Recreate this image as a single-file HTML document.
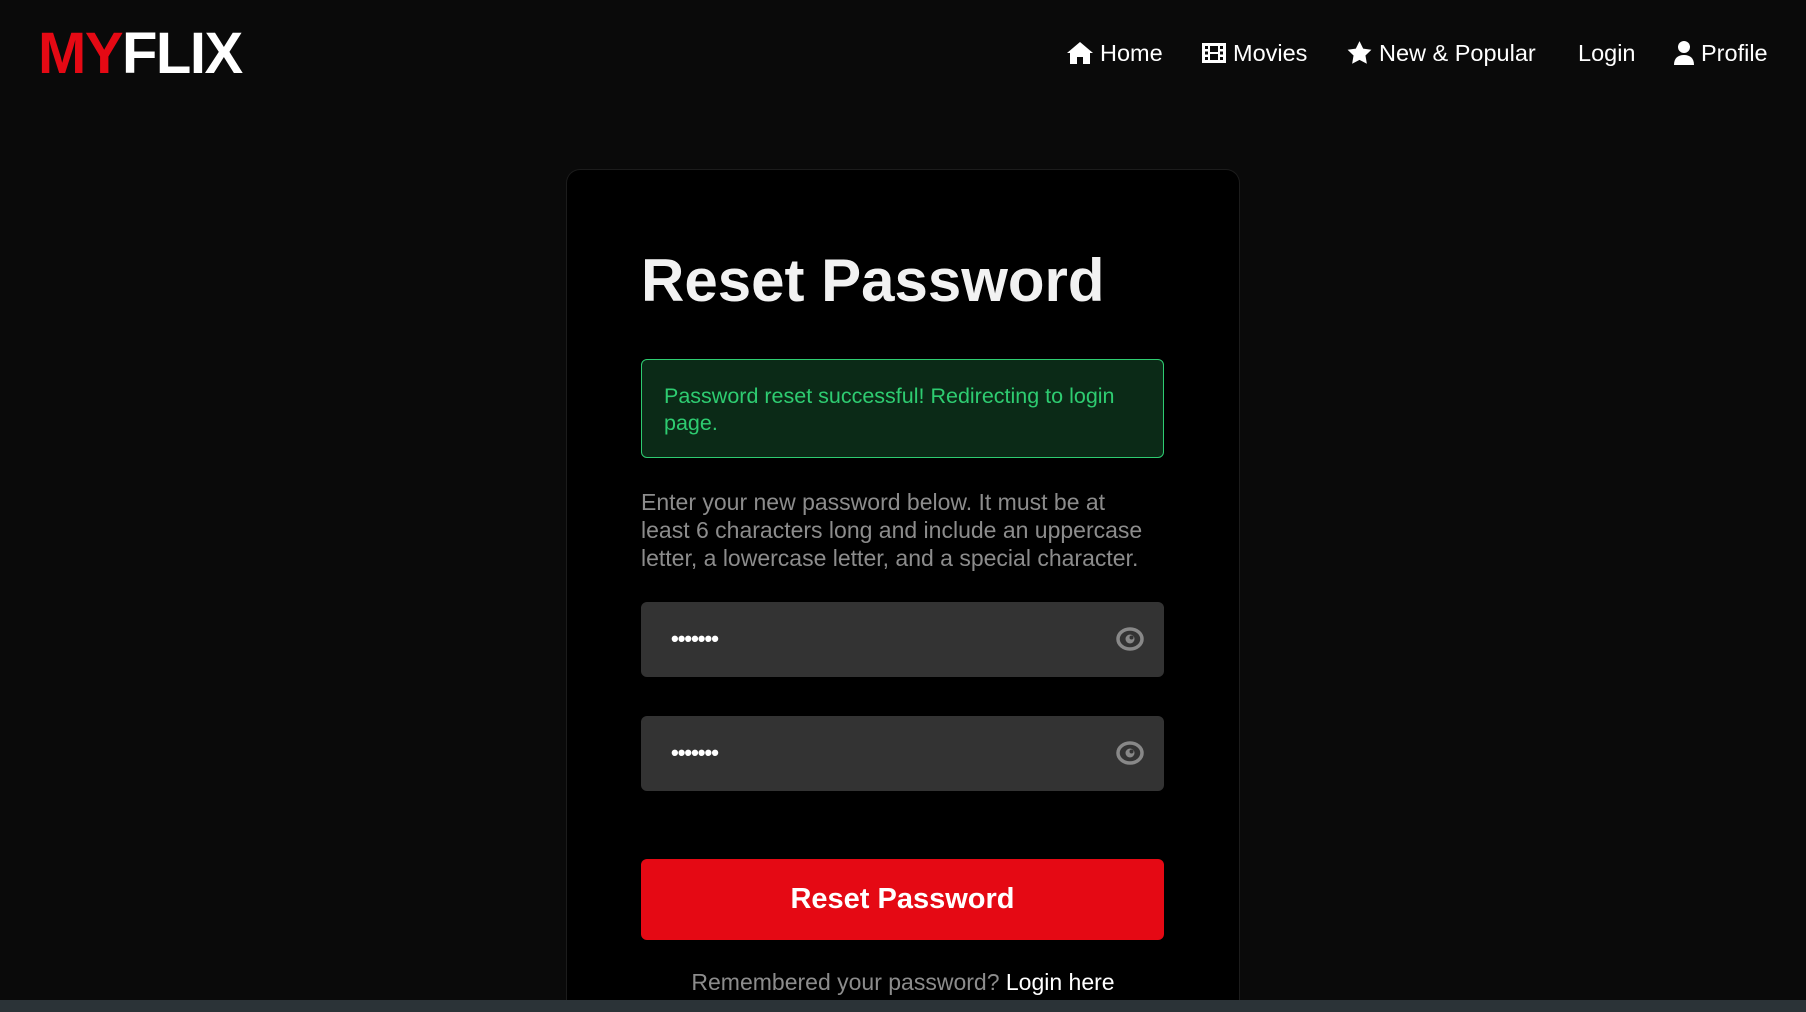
<!DOCTYPE html>
<html><head><meta charset="utf-8"><style>
*{margin:0;padding:0;box-sizing:border-box}
html,body{width:1806px;height:1012px;overflow:hidden;background:#0a0a0a;font-family:"Liberation Sans",Arial,sans-serif;color:#fff;position:relative}
.logo{position:absolute;left:38px;top:23px;font-size:58px;font-weight:bold;letter-spacing:-1.5px;line-height:62px}
.logo .r{color:#e50914}
.nav{position:absolute;top:38px;font-size:23.5px;line-height:30px;color:#fff;display:flex;align-items:center;gap:6px}
.nav svg{fill:#fff}
.card{position:absolute;left:566px;top:169px;width:674px;height:843px;background:#000;border:1px solid #1c1c1c;border-bottom:none;border-radius:14px 14px 0 0}
h1{position:absolute;left:641px;top:241px;font-size:60px;font-weight:bold;line-height:80px;color:#f2f2f2}
.alert{position:absolute;left:641px;top:359px;width:523px;height:99px;background:#0b2a17;border:1.5px solid #2ecc71;border-radius:6px;color:#2ecc71;font-size:21.5px;line-height:27px;padding:23px 22px}
.desc{position:absolute;left:641px;top:488px;width:512px;font-size:23px;line-height:28px;color:#8c8c8c}
.inp{position:absolute;left:641px;width:523px;height:75px;background:#333;border-radius:6px}
.dots{position:absolute;left:30px;top:24px;color:#fff;font-size:22px;letter-spacing:-1px;font-weight:bold}
.eye{position:absolute;right:20px;top:25px}
.btn{position:absolute;left:641px;top:859px;width:523px;height:81px;background:#e50914;border-radius:6px;text-align:center;line-height:81px;font-size:29px;font-weight:bold}
.foot{position:absolute;left:566px;width:674px;top:969px;text-align:center;font-size:23px;color:#8c8c8c}
.foot b{color:#fff;font-weight:normal}
.bar{position:absolute;left:0;top:1000px;width:1806px;height:12px;background:#2b3337}
</style></head><body>
<div class="logo"><span class="r">MY</span>FLIX</div>
<div class="nav" style="left:1066px"><svg width="28" height="24" viewBox="0 0 28 24"><path d="M14 1 L27 12 L24 12 L24 23 L17 23 L17 16 L11 16 L11 23 L4 23 L4 12 L1 12 Z"/></svg>Home</div>
<div class="nav" style="left:1201px"><svg width="26" height="22" viewBox="0 0 26 22"><path fill-rule="evenodd" d="M1 1h24v20H1z M4 4v3h3V4z M4 9.5v3h3v-3z M4 15v3h3v-3z M19 4v3h3V4z M19 9.5v3h3v-3z M19 15v3h3v-3z M9 4v6h8V4z M9 12v6h8v-6z"/></svg>Movies</div>
<div class="nav" style="left:1346px"><svg width="27" height="26" viewBox="0 0 24 24"><path d="M12 1l3.4 7 7.6 1-5.5 5.3 1.3 7.6L12 18.3 5.2 21.9l1.3-7.6L1 9l7.6-1z"/></svg>New &amp; Popular</div>
<div class="nav" style="left:1578px">Login</div>
<div class="nav" style="left:1673px"><svg width="22" height="26" viewBox="0 0 22 26"><circle cx="11" cy="7" r="6"/><path d="M1 25c0-7 4-10 10-10s10 3 10 10z"/></svg>Profile</div>
<div class="card"></div>
<h1>Reset Password</h1>
<div class="alert">Password reset successful! Redirecting to login page.</div>
<div class="desc">Enter your new password below. It must be at least 6 characters long and include an uppercase letter, a lowercase letter, and a special character.</div>
<div class="inp" style="top:602px"><span class="dots">•••••••</span><svg class="eye" width="28" height="24" viewBox="0 0 28 24"><ellipse cx="14" cy="12" rx="12" ry="10" fill="none" stroke="#888" stroke-width="3.5"/><circle cx="14" cy="12" r="4.5" fill="#888"/><circle cx="15.5" cy="10.5" r="2" fill="#333"/></svg></div>
<div class="inp" style="top:716px"><span class="dots">•••••••</span><svg class="eye" width="28" height="24" viewBox="0 0 28 24"><ellipse cx="14" cy="12" rx="12" ry="10" fill="none" stroke="#888" stroke-width="3.5"/><circle cx="14" cy="12" r="4.5" fill="#888"/><circle cx="15.5" cy="10.5" r="2" fill="#333"/></svg></div>
<div class="btn">Reset Password</div>
<div class="foot">Remembered your password? <b>Login here</b></div>
<div class="bar"></div>
</body></html>
